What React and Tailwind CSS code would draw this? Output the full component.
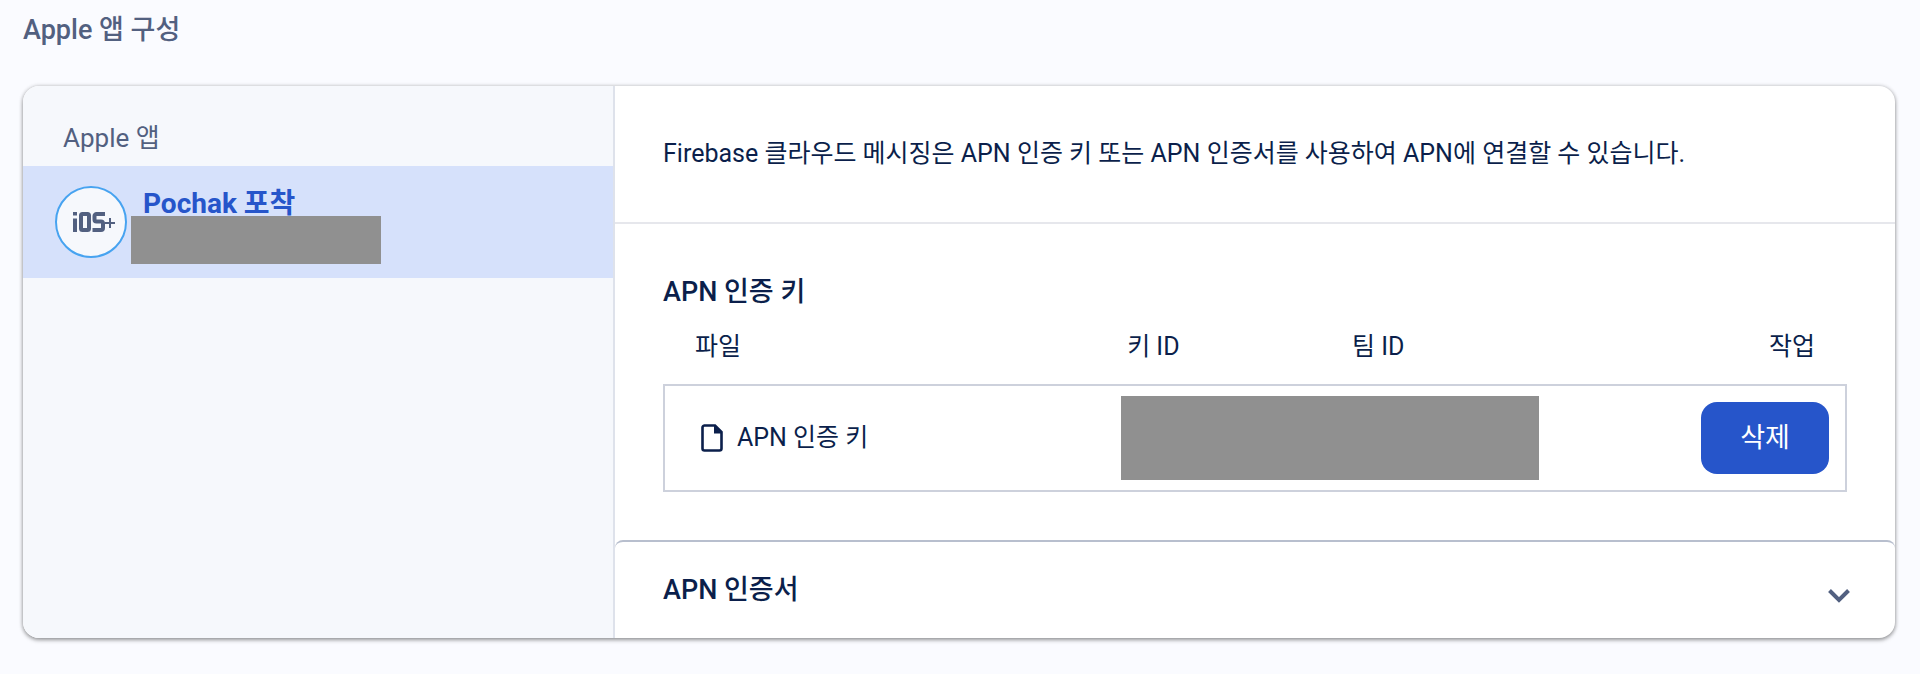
import React from "react";

const headings = "text-[27px] leading-9 font-medium";

function IosPlusLogo() {
  return (
    <svg viewBox="-6 0 48 20" className="h-5 w-12 shrink-0" role="img" aria-label="iOS+">
      <g fill="#526080">
        <rect x="0" y="0" width="4" height="3.5" />
        <rect x="0" y="6.5" width="4" height="13.5" />
        <rect x="31.5" y="10" width="10.5" height="2" />
        <rect x="36" y="6" width="2" height="10" />
      </g>
      <rect x="8" y="2" width="8" height="16" rx="1.500" fill="none" stroke="#526080" strokeWidth="4" />
      <path d="M32 2h-8.500a2 2 0 0 0-2 2v3.500a2 2 0 0 0 2 2h4.500a2 2 0 0 1 2 2v4.500a2 2 0 0 1-2 2h-8.500" fill="none" stroke="#526080" strokeWidth="4" />
    </svg>
  );
}

function FileIcon() {
  return (
    <svg viewBox="0 0 22 28" className="h-7 w-[22px] shrink-0" aria-hidden="true">
      <path d="M3 1.500H14L20.500 8V24.500a2 2 0 0 1-2 2H3.500a2 2 0 0 1-2-2V3.500a2 2 0 0 1 2-2Z" fill="none" stroke="#0b1f4b" strokeWidth="2.600" />
      <path d="M13 1.500V9.500H21Z" fill="#0b1f4b" />
    </svg>
  );
}

function Sidebar() {
  return (
    <aside className="w-[592px] shrink-0 border-r-2 border-[#dee2eb] bg-[#f6f8fc]">
      <h2 className="px-10 pt-8 pb-2 text-[26px] leading-10 text-[#526080]">Apple 앱</h2>
      <a href="#pochak" className="flex h-28 items-center gap-1 bg-[#d6e1fb] px-8">
        <span className="flex size-[72px] shrink-0 items-center justify-center rounded-full border-2 border-[#47a3f0] bg-[#f6f8fc]">
          <IosPlusLogo />
        </span>
        <span className="flex flex-col self-start pt-6">
          <span className="h-[26px] pl-3 text-[28px] leading-7 font-bold text-[#2655ca]">Pochak 포착</span>
          <span className="h-12 w-[250px] bg-[#909090]" aria-hidden="true" />
        </span>
      </a>
    </aside>
  );
}

function KeyTable() {
  const head = "h-[74px] px-8 text-left font-normal";
  return (
    <table className="w-full table-fixed border-separate border-spacing-0 text-[25px] leading-8">
      <colgroup>
        <col className="w-[36.500%]" />
        <col className="w-[19%]" />
        <col className="w-[25%]" />
        <col />
      </colgroup>
      <thead>
        <tr>
          <th scope="col" className={head}>파일</th>
          <th scope="col" className={head}>키 ID</th>
          <th scope="col" className={head}>팀 ID</th>
          <th scope="col" className="h-[74px] px-8 text-right font-normal">작업</th>
        </tr>
      </thead>
      <tbody>
        <tr>
          <td className="h-[108px] border-y-2 border-l-2 border-[#cdd1dc] pl-9">
            <div className="flex items-center gap-[14px]">
              <FileIcon />
              <span>APN 인증 키</span>
            </div>
          </td>
          <td colSpan={2} className="border-y-2 border-[#cdd1dc] pl-[26px]">
            <div className="h-[84px] w-[418px] bg-[#909090]" aria-hidden="true" />
          </td>
          <td className="border-y-2 border-r-2 border-[#cdd1dc] pr-4 text-right">
            <button type="button" className="h-[72px] w-32 rounded-2xl bg-[#2655ca] text-[27px] leading-8 text-white">삭제</button>
          </td>
        </tr>
      </tbody>
    </table>
  );
}

export default function App() {
  return (
    <main className="min-h-screen bg-[#fafbff] pt-3 pr-[25px] pb-9 pl-[23px] font-['Roboto','Noto_Sans_CJK_KR',sans-serif] text-[#0b1f4b]">
      <h1 className="text-[27px] leading-9 font-medium text-[#526080]">Apple 앱 구성</h1>
      <div className="mt-[38px] flex overflow-hidden rounded-2xl bg-white shadow-[0_2px_4px_rgba(0,0,0,0.36),0_0_4px_rgba(0,0,0,0.18)]">
        <Sidebar />
        <div className="min-w-0 flex-1">
          <p className="border-b-2 border-[#e6e7ec] px-12 py-12 text-[25px] leading-10">
            Firebase 클라우드 메시징은 APN 인증 키 또는 APN 인증서를 사용하여 APN에 연결할 수 있습니다.
          </p>
          <section className="px-12 pt-[50px] pb-12">
            <h2 className={headings}>APN 인증 키</h2>
            <KeyTable />
          </section>
          <section className="rounded-t-lg border-t-2 border-[#b8bfce]">
            <button type="button" aria-expanded="false" className="flex h-24 w-full items-center justify-between pr-11 pl-12 text-left">
              <span className={headings}>APN 인증서</span>
              <svg viewBox="0 0 24 16" className="mt-3 h-4 w-6" aria-hidden="true">
                <path d="M2.500 2.500 12 12l9.500-9.500" fill="none" stroke="#526080" strokeWidth="4" />
              </svg>
            </button>
          </section>
        </div>
      </div>
    </main>
  );
}
